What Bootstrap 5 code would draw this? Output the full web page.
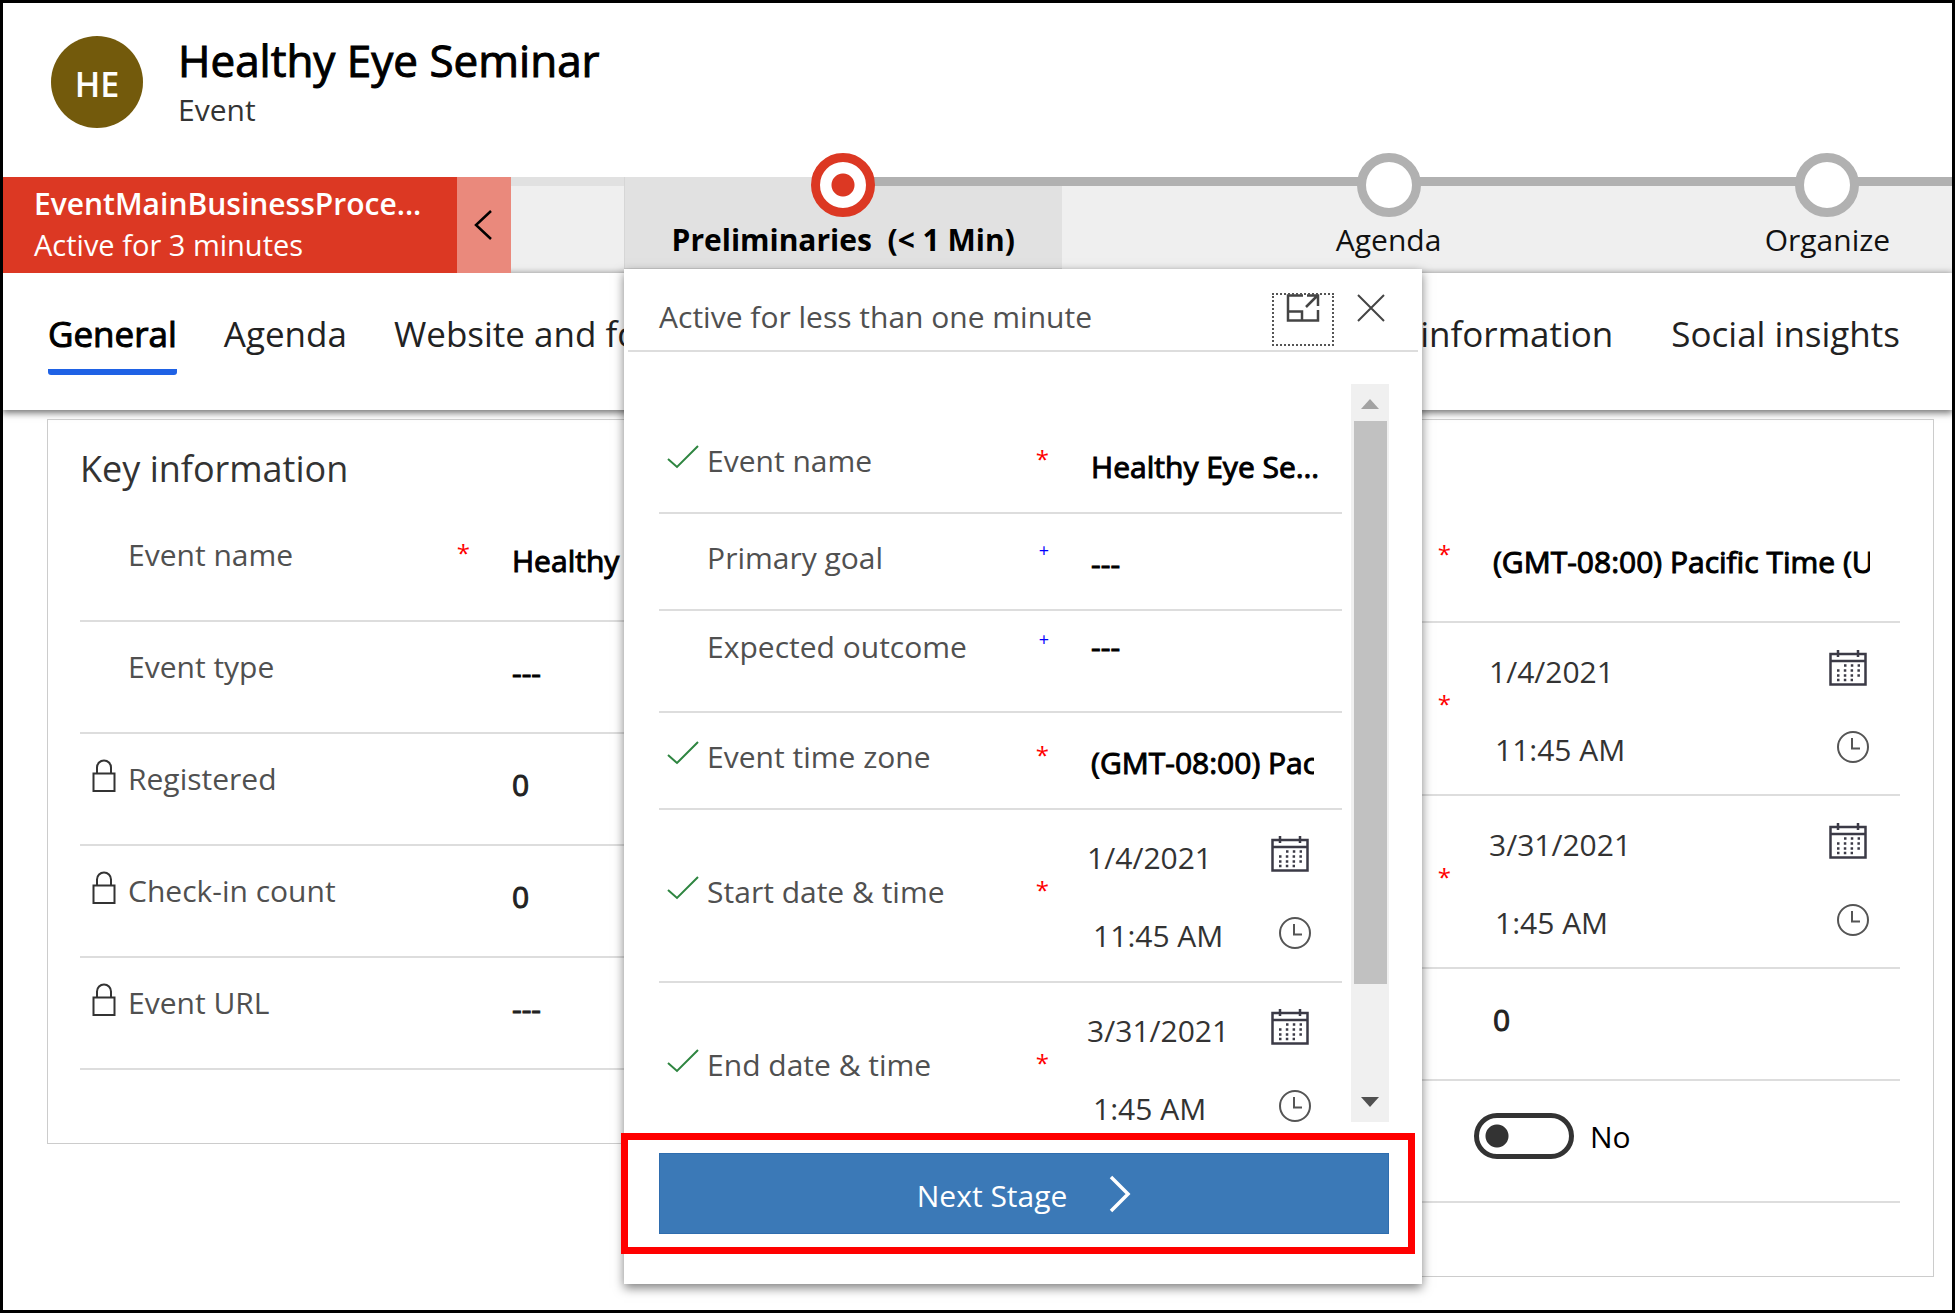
<!DOCTYPE html>
<html lang="en">
<head>
<meta charset="utf-8">
<meta name="viewport" content="width=device-width, initial-scale=1">
<title>Healthy Eye Seminar - Event</title>
<link href="https://cdn.jsdelivr.net/npm/bootstrap@5.3.0/dist/css/bootstrap.min.css" rel="stylesheet">
<style>
body { font-family: "Open Sans", "Noto Sans", sans-serif; font-size: 30px; line-height: 40px; color: #333; background: #fff; }
.app-frame { min-height: 100vh; border: 3px solid #000; overflow: hidden; }
.record-head { height: 174px; padding: 27px 48px 0; gap: 35px; }
.avatar { width: 92px; height: 92px; margin-top: 6px; padding-top: 3px; background: #735a0c; color: #fff; font-size: 34px; font-weight: 600; }
.record-title { font-size: 44px; line-height: 60px; color: #000; -webkit-text-stroke: 1px #000; }

/* business process bar */
.icon-button { border: 0; padding: 0; background: transparent; line-height: 0; }
.process { height: 96px; background: #efefef; }
.process-name { width: 454px; padding: 6px 0 0 31px; font-size: 29px; line-height: 41px; background: #dc3823; color: #fff; }
.process-name strong { font-size: 30px; font-weight: 600; }
.process-toggle { width: 54px; background: #ea897c; }
.stage-gap { flex: 113 1 0; border-top: 9px solid #e1e1e1; }
.stage { border-top: 9px solid #b1b1b1; color: #111; padding-top: 34px; }
.stage-active { flex: 438 1 0; height: 92px; padding-top: 43px; color: #000; font-weight: 700;
  background: linear-gradient(#b1b1b1, #b1b1b1) right top / 50% 9px no-repeat #e1e1e1; box-shadow: inset 0 -1px #ccc, inset 1px 0 #d6d6d6; }
.stage-agenda { flex: 652 1 0; }
.stage-organize { flex: 225 1 0; }
.stage-rest { flex: 12 1 0; border-top: 9px solid #b1b1b1; }
.stage-dot { top: -33px; width: 64px; height: 64px; border: 9px solid #b1b1b1; background: #fff; }
.stage-active .stage-dot { top: -24px; border-color: #dc3823; background: radial-gradient(circle, #dc3823 11px, #fff 12px); }

/* tabs */
.tab-strip { height: 137px; padding: 36px 52px 0 45px; font-size: 35px; line-height: 50px; box-shadow: 0 2px 7px 1px rgba(0,0,0,.55); }
.tab-strip a { color: #222; text-decoration: none; padding-bottom: 10px; white-space: nowrap; }
.tab-strip a.current { color: #000; -webkit-text-stroke: 1px #000; border-bottom: 6px solid #1f62e5; border-radius: 3px; }
.tabs-start { gap: 47px; }
.tabs-end { gap: 58px; }

/* form */
.form-area { padding: 9px 18px 32px 44px; gap: 75px; }
.panel { flex: 1 1 0; min-width: 0; border: 1px solid #ccc; padding: 24px 33px 73px 32px; }
.panel h2 { font-size: 36px; line-height: 50px; font-weight: 400; margin: 0 0 16px; color: #333; }
.panel-plain { padding-top: 91px; }
.field { height: 112px; border-bottom: 2px solid #ddd; }
.field-when { height: 173px; }
.field-switch { height: 122px; }
.field-name { width: 432px; flex: none; padding: 25px 42px 0 0; color: #505050; }
.field-when .field-name { padding-top: 63px; }
.field-icon { width: 48px; flex: none; }
.lock-icon { padding-left: 12px; }
.need { color: #f00; font-size: 24px; line-height: 36px; }
.hint { color: #00f; font-size: 18px; line-height: 24px; }
.field-value { flex: 1 1 0; min-width: 0; padding: 31px 19px 0 0; }
.field-when .field-value { padding: 29px 33px 0 0; }
.plain-input { width: 100%; min-width: 0; height: 40px; border: 0; padding: 0; background: transparent; color: #333; appearance: none; outline: 0; text-overflow: ellipsis; overflow: hidden; }
select.plain-input { text-overflow: clip; }
.strong-input { color: #000; -webkit-text-stroke: 1px #000; }
.soft-input { color: #222; -webkit-text-stroke: 1px #222; }
.panel .zone-value { padding-right: 30px; }
.when-line { height: 78px; margin-left: -4px; }
.when-line .plain-input { flex: 1 1 0; }
.when-line .icon-button { margin-top: -2px; }
.when-time { padding-left: 6px; margin-right: -3px; }
.when-time .icon-button { margin-top: 0; }
.switch-box { appearance: none; width: 100px; height: 46px; border: 5px solid #333; border-radius: 23px; margin: 0 0 0 -19px;
  background: radial-gradient(circle at 18px 50%, #333 11px, #fff 12px); }
.field-switch .field-value { padding-top: 32px; }

/* stage flyout */
.flyout { width: 798px; height: 1015px; background: #fff; z-index: 10; color: #333; font-weight: 400; box-shadow: 0 4px 10px rgba(0,0,0,.5); }
.flyout-head { height: 83px; margin: 0 4px; padding: 24px 33px 0 31px; border-bottom: 2px solid #ddd; color: #505050; gap: 23px; }
.pop-out { width: 62px; height: 53px; outline: 2px dotted #555; outline-offset: -2px; }
.flyout-body { height: 738px; margin: 32px 33px 0 35px; gap: 9px; }
.flyout-fields { flex: 1 1 0; min-width: 0; overflow: hidden; padding-top: 33px; }
.flyout-fields .field { height: 97px; }
.flyout-fields .field-when { height: 173px; }
.flyout-fields .field-tall { height: 102px; }
.flyout-fields .field-name { padding-top: 24px; }
.flyout-fields .field-when .field-name { padding-top: 62px; }
.flyout-fields .field-tall .field-name { padding-top: 16px; }
.flyout-fields .field-value { padding: 30px 21px 0 0; }
.flyout-fields .field-tall .field-value { padding-top: 16px; }
.flyout-fields .zone-value { padding-right: 28px; }
.flyout-fields .field-when .field-value { padding-top: 28px; padding-right: 33px; }
.scroll-track { width: 38px; background: #f0f0f0; padding: 15px 0; }
.scroll-thumb { width: 33px; height: 563px; background: #c1c1c1; margin-top: 12px; }
.next-ring { width: 794px; height: 121px; margin: 11px 0 0 -3px; border: 7px solid #f00; padding: 13px 19px 0 31px; }
.next-button { height: 81px; background: #3b79b7; border: 1px solid #2f6dae; color: #fff; gap: 42px; }
</style>
</head>
<body>
<svg class="d-none">
  <symbol id="lock" viewBox="0 0 24 34"><path d="M1.500 14.500h21v17.500h-21zM5 14V8.500a7 7 0 0 1 14 0V14" fill="none" stroke="#333" stroke-width="2"/></symbol>
  <symbol id="tick" viewBox="0 0 32 24"><path d="M1 14l9 8L31 1" fill="none" stroke="#2e8540" stroke-width="2"/></symbol>
  <symbol id="calendar" viewBox="0 0 38 36"><path d="M1.500 4h35v30.500h-35zM1.500 11h35" fill="none" stroke="#3b3a46" stroke-width="2.500"/><path d="M9 0v7M29 0v7" stroke="#3b3a46" stroke-width="2.500"/><path d="M15 15.500h16M8 20.500h23M8 25.500h23M8 30h16" stroke="#3b3a46" stroke-width="2.500" stroke-dasharray="2.500 4.300"/></symbol>
  <symbol id="clock" viewBox="0 0 34 34"><circle cx="17" cy="17" r="15" fill="none" stroke="#555" stroke-width="2"/><path d="M16 8v10.500h8" fill="none" stroke="#555" stroke-width="2"/></symbol>
</svg>

<div class="app-frame">
  <header class="record-head d-flex">
    <div class="avatar rounded-circle d-flex align-items-center justify-content-center">HE</div>
    <div>
      <h1 class="record-title fw-normal m-0">Healthy Eye Seminar</h1>
      <div>Event</div>
    </div>
  </header>

  <section class="process d-flex">
    <div class="process-name flex-shrink-0"><strong class="d-block">EventMainBusinessProce...</strong>Active for 3 minutes</div>
    <button class="icon-button process-toggle flex-shrink-0" aria-label="Collapse">
      <svg width="20" height="32" viewBox="0 0 20 32"><path d="M17 2L2 16l15 14" fill="none" stroke="#000" stroke-width="2.500"/></svg>
    </button>
    <div class="stage-gap"></div>
    <div class="stage-active position-relative text-center text-nowrap">
      <span class="stage-dot rounded-circle position-absolute start-50 translate-middle-x"></span>
      Preliminaries&nbsp; (&lt; 1 Min)

      <div class="flyout position-absolute top-100 start-0 text-start">
        <div class="flyout-head d-flex">
          <span class="flex-grow-1 pt-1">Active for less than one minute</span>
          <button class="pop-out icon-button d-flex justify-content-center" aria-label="Dock">
            <svg width="34" height="30" viewBox="0 0 34 30"><path d="M17 2.500H2v25h30V17M2 18.500h14v9M20 14L31 3M21 2.500h11V13" fill="none" stroke="#444" stroke-width="2.500"/></svg>
          </button>
          <button class="icon-button d-flex" aria-label="Close">
            <svg width="28" height="30" viewBox="0 0 28 30"><path d="M1 2l26 26M27 2L1 28" fill="none" stroke="#444" stroke-width="2"/></svg>
          </button>
        </div>

        <div class="flyout-body d-flex">
          <div class="flyout-fields">
            <div class="field d-flex">
              <label class="field-name d-flex" for="f-name"><span class="field-icon ps-2"><svg class="d-block mt-1" width="32" height="24"><use href="#tick"/></svg></span><span class="flex-grow-1">Event name</span><span class="need">*</span></label>
              <div class="field-value"><input id="f-name" class="plain-input strong-input" value="Healthy Eye Seminar"></div>
            </div>
            <div class="field d-flex">
              <label class="field-name d-flex" for="f-goal"><span class="field-icon"></span><span class="flex-grow-1">Primary goal</span><span class="hint">+</span></label>
              <div class="field-value"><input id="f-goal" class="plain-input strong-input" value="---"></div>
            </div>
            <div class="field field-tall d-flex">
              <label class="field-name d-flex" for="f-outcome"><span class="field-icon"></span><span class="flex-grow-1">Expected outcome</span><span class="hint">+</span></label>
              <div class="field-value"><input id="f-outcome" class="plain-input strong-input" value="---"></div>
            </div>
            <div class="field d-flex">
              <label class="field-name d-flex" for="f-zone"><span class="field-icon ps-2"><svg class="d-block mt-1" width="32" height="24"><use href="#tick"/></svg></span><span class="flex-grow-1">Event time zone</span><span class="need">*</span></label>
              <div class="field-value zone-value"><select id="f-zone" class="plain-input strong-input"><option>(GMT-08:00) Pacific Time (US &amp; Canada)</option></select></div>
            </div>
            <div class="field field-when d-flex">
              <label class="field-name d-flex" for="f-start"><span class="field-icon ps-2"><svg class="d-block mt-1" width="32" height="24"><use href="#tick"/></svg></span><span class="flex-grow-1">Start date &amp; time</span><span class="need">*</span></label>
              <div class="field-value">
                <div class="when-line d-flex"><input id="f-start" class="plain-input" value="1/4/2021"><button class="icon-button d-flex" aria-label="Pick date"><svg width="38" height="36"><use href="#calendar"/></svg></button></div>
                <div class="when-line when-time d-flex"><input class="plain-input" aria-label="Start time" value="11:45 AM"><button class="icon-button d-flex" aria-label="Pick time"><svg width="34" height="34"><use href="#clock"/></svg></button></div>
              </div>
            </div>
            <div class="field field-when d-flex">
              <label class="field-name d-flex" for="f-end"><span class="field-icon ps-2"><svg class="d-block mt-1" width="32" height="24"><use href="#tick"/></svg></span><span class="flex-grow-1">End date &amp; time</span><span class="need">*</span></label>
              <div class="field-value">
                <div class="when-line d-flex"><input id="f-end" class="plain-input" value="3/31/2021"><button class="icon-button d-flex" aria-label="Pick date"><svg width="38" height="36"><use href="#calendar"/></svg></button></div>
                <div class="when-line when-time d-flex"><input class="plain-input" aria-label="End time" value="1:45 AM"><button class="icon-button d-flex" aria-label="Pick time"><svg width="34" height="34"><use href="#clock"/></svg></button></div>
              </div>
            </div>
          </div>
          <div class="scroll-track d-flex flex-column align-items-center">
            <svg width="18" height="10"><path d="M0 10L9 0l9 10z" fill="#a3a3a3"/></svg>
            <div class="scroll-thumb"></div>
            <svg class="mt-auto" width="18" height="10"><path d="M0 0h18L9 10z" fill="#505050"/></svg>
          </div>
        </div>

        <div class="next-ring">
          <button class="next-button w-100 d-flex align-items-center justify-content-center">
            <span class="pt-1">Next Stage</span>
            <svg width="22" height="38" viewBox="0 0 22 38"><path d="M2 2l17 17L2 36" fill="none" stroke="#fff" stroke-width="3.500"/></svg>
          </button>
        </div>
      </div>
    </div>
    <div class="stage stage-agenda position-relative text-center"><span class="stage-dot rounded-circle position-absolute start-50 translate-middle-x"></span>Agenda</div>
    <div class="stage stage-organize position-relative text-center"><span class="stage-dot rounded-circle position-absolute start-50 translate-middle-x"></span>Organize</div>
    <div class="stage-rest"></div>
  </section>

  <nav class="tab-strip d-flex justify-content-between align-items-start">
    <div class="tabs-start d-flex">
      <a href="#" class="current">General</a>
      <a href="#">Agenda</a>
      <a href="#">Website and form</a>
    </div>
    <div class="tabs-end d-flex">
      <a href="#">Additional information</a>
      <a href="#">Social insights</a>
    </div>
  </nav>

  <main class="form-area d-flex align-items-start">
    <section class="panel">
      <h2>Key information</h2>
      <div class="field d-flex">
        <label class="field-name d-flex" for="k-name"><span class="field-icon"></span><span class="flex-grow-1">Event name</span><span class="need">*</span></label>
        <div class="field-value"><input id="k-name" class="plain-input strong-input" value="Healthy Eye Seminar"></div>
      </div>
      <div class="field d-flex">
        <label class="field-name d-flex" for="k-type"><span class="field-icon"></span>Event type</label>
        <div class="field-value"><input id="k-type" class="plain-input strong-input" value="---"></div>
      </div>
      <div class="field d-flex">
        <label class="field-name d-flex" for="k-reg"><span class="field-icon lock-icon"><svg class="d-block" width="24" height="34"><use href="#lock"/></svg></span>Registered</label>
        <div class="field-value"><input id="k-reg" class="plain-input strong-input soft-input" value="0" readonly></div>
      </div>
      <div class="field d-flex">
        <label class="field-name d-flex" for="k-check"><span class="field-icon lock-icon"><svg class="d-block" width="24" height="34"><use href="#lock"/></svg></span>Check-in count</label>
        <div class="field-value"><input id="k-check" class="plain-input strong-input soft-input" value="0" readonly></div>
      </div>
      <div class="field d-flex">
        <label class="field-name d-flex" for="k-url"><span class="field-icon lock-icon"><svg class="d-block" width="24" height="34"><use href="#lock"/></svg></span>Event URL</label>
        <div class="field-value"><input id="k-url" class="plain-input strong-input soft-input" value="---" readonly></div>
      </div>
    </section>

    <section class="panel panel-plain">
      <div class="field d-flex">
        <div class="field-name d-flex justify-content-end"><span class="need">*</span></div>
        <div class="field-value zone-value"><select class="plain-input strong-input" aria-label="Event time zone"><option>(GMT-08:00) Pacific Time (US &amp; Canada)</option></select></div>
      </div>
      <div class="field field-when d-flex">
        <div class="field-name d-flex justify-content-end"><span class="need">*</span></div>
        <div class="field-value">
          <div class="when-line d-flex"><input class="plain-input" aria-label="Start date" value="1/4/2021"><button class="icon-button d-flex" aria-label="Pick date"><svg width="38" height="36"><use href="#calendar"/></svg></button></div>
          <div class="when-line when-time d-flex"><input class="plain-input" aria-label="Start time" value="11:45 AM"><button class="icon-button d-flex" aria-label="Pick time"><svg width="34" height="34"><use href="#clock"/></svg></button></div>
        </div>
      </div>
      <div class="field field-when d-flex">
        <div class="field-name d-flex justify-content-end"><span class="need">*</span></div>
        <div class="field-value">
          <div class="when-line d-flex"><input class="plain-input" aria-label="End date" value="3/31/2021"><button class="icon-button d-flex" aria-label="Pick date"><svg width="38" height="36"><use href="#calendar"/></svg></button></div>
          <div class="when-line when-time d-flex"><input class="plain-input" aria-label="End time" value="1:45 AM"><button class="icon-button d-flex" aria-label="Pick time"><svg width="34" height="34"><use href="#clock"/></svg></button></div>
        </div>
      </div>
      <div class="field d-flex">
        <div class="field-name"></div>
        <div class="field-value"><input class="plain-input strong-input soft-input" aria-label="Count" value="0"></div>
      </div>
      <div class="field field-switch d-flex">
        <div class="field-name"></div>
        <div class="field-value d-flex align-items-start"><input type="checkbox" role="switch" class="switch-box" id="sw"><label class="text-black ps-3 pt-1" for="sw">No</label></div>
      </div>
    </section>
  </main>
</div>
<script src="https://cdn.jsdelivr.net/npm/bootstrap@5.3.0/dist/js/bootstrap.bundle.min.js"></script>
</body>
</html>
